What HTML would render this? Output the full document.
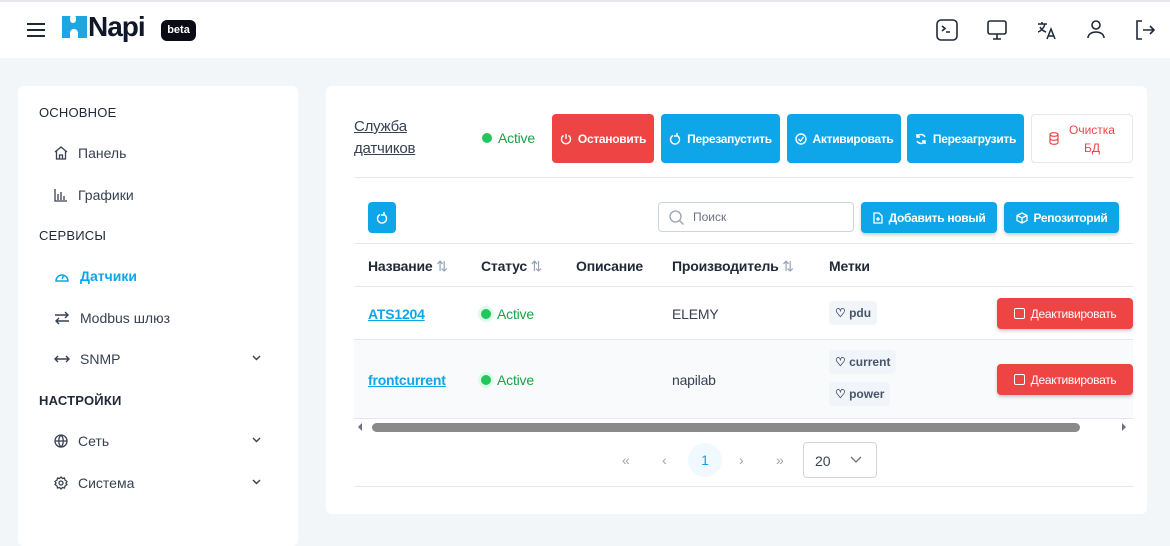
<!DOCTYPE html>
<html><head><meta charset="utf-8"><style>
*{box-sizing:border-box;margin:0;padding:0}
body{width:1170px;height:531px;overflow:hidden;background:#f3f6f9;font-family:"Liberation Sans",sans-serif;color:#334155;position:relative}
.a{position:absolute}
svg{display:block}
.top{left:0;top:0;width:1170px;height:58px;background:#fff;border-top:2px solid #e5e7eb}
.card{background:#fff;border-radius:6px}
.sec{font-size:13px;color:#1f2937;letter-spacing:.2px}
.item{font-size:14px;color:#374151;display:flex;align-items:center;gap:10px}
.btn{color:#fff;font-size:12px;font-weight:bold;display:flex;align-items:center;justify-content:center;gap:6px;border-radius:4px;letter-spacing:-.3px}
.blue{background:#0ea5e9}
.red{background:#ef4444}
.th{font-size:14px;font-weight:bold;color:#1f2937;letter-spacing:-.2px}
.td{font-size:14px;color:#374151;letter-spacing:-.2px}
.lnk{font-size:14px;font-weight:bold;color:#0ea5e9;text-decoration:underline;letter-spacing:-.2px}
.act{font-size:14px;color:#16a34a;display:flex;align-items:center;gap:6px;letter-spacing:-.2px}
.dot{width:10px;height:10px;border-radius:50%;background:#22c55e;box-shadow:0 0 0 3px #dcfce7}
.tag{background:#f1f5f9;border-radius:4px;font-size:12px;font-weight:bold;color:#475569;display:flex;align-items:center;gap:3px;padding:0 6px;height:24px}
.hl{height:1px;background:#e5e7eb}
</style></head><body>
<div class="a top"></div>
<svg class="a" style="left:26px;top:22px" width="20" height="16" viewBox="0 0 20 16"><path d="M1 2h18M1 8h18M1 14h18" stroke="#1f2937" stroke-width="2"/></svg>
<svg class="a" style="left:62px;top:16px" width="25" height="22" viewBox="0 0 25 22"><rect x="0" y="0" width="25" height="22" fill="#1ca7e3"/><rect x="8" y="-1" width="6" height="8" rx="3" fill="#fff"/><path d="M8 23v-6a4 4 0 0 1 8 0v6z" fill="#fff"/></svg>
<div class="a" style="left:88px;top:11px;font-size:28px;font-weight:bold;color:#0f172a;letter-spacing:-1px">Napi</div>
<div class="a" style="left:161px;top:20px;width:35px;height:21px;background:#0b0b16;border-radius:6px;color:#fff;font-size:11px;font-weight:bold;text-align:center;line-height:21px">beta</div>
<svg class="a" style="left:936px;top:19px" width="22" height="22" viewBox="0 0 22 22" fill="none" stroke="#1f2937" stroke-width="1.6"><rect x="1" y="1" width="20" height="20" rx="4"/><path d="M6 7l3 2.5-3 2.5M10 13h4"/></svg>
<svg class="a" style="left:986px;top:19px" width="22" height="22" viewBox="0 0 22 22" fill="none" stroke="#1f2937" stroke-width="1.6"><rect x="2" y="2" width="18" height="13" rx="2"/><path d="M11 15v5M7 20h8"/></svg>
<svg class="a" style="left:1036px;top:19px" width="22" height="22" viewBox="0 0 22 22" fill="none" stroke="#1f2937" stroke-width="1.5"><path d="M2 5h9M6 3v2M9 5c-1 4-4 7-7 8M4 8c1 2 3 4 6 5M11 20l4-10 4 10M12.5 17h5"/></svg>
<svg class="a" style="left:1085px;top:18px" width="22" height="22" viewBox="0 0 22 22" fill="none" stroke="#1f2937" stroke-width="1.6"><circle cx="11" cy="7" r="4"/><path d="M3 20c0-4 4-6 8-6s8 2 8 6"/></svg>
<svg class="a" style="left:1134px;top:19px" width="22" height="22" viewBox="0 0 22 22" fill="none" stroke="#1f2937" stroke-width="1.6"><path d="M8 2H3v18h5M9 11h11M16 7l4 4-4 4"/></svg>

<div class="a card" style="left:18px;top:86px;width:280px;height:460px"></div>
<div class="a sec" style="left:39px;top:105px">ОСНОВНОЕ</div>
<div class="a item" style="left:54px;top:145px"><svg width="14" height="14" viewBox="0 0 14 14" fill="none" stroke="#374151" stroke-width="1.3"><path d="M1 6l6-5 6 5M2.5 5v8h9V5M5.5 13V9h3v4"/></svg>Панель</div>
<div class="a item" style="left:54px;top:187px"><svg width="14" height="14" viewBox="0 0 14 14" fill="none" stroke="#374151" stroke-width="1.3"><path d="M1 1v12h12M4 12V6M7 12V4M10 12V8"/></svg>Графики</div>
<div class="a sec" style="left:39px;top:228px">СЕРВИСЫ</div>
<div class="a item" style="left:54px;top:268px;color:#0ea5e9;font-weight:bold"><svg width="16" height="14" viewBox="0 0 16 14" fill="none" stroke="#0ea5e9" stroke-width="1.5"><path d="M2 12a6 6 0 1 1 12 0z"/><path d="M8 10l2-4"/></svg>Датчики</div>
<div class="a item" style="left:54px;top:310px"><svg width="16" height="14" viewBox="0 0 16 14" fill="none" stroke="#374151" stroke-width="1.4"><path d="M1 4h13M11 1l3 3-3 3M15 10H2M5 7l-3 3 3 3"/></svg>Modbus шлюз</div>
<div class="a item" style="left:54px;top:351px"><svg width="16" height="10" viewBox="0 0 16 10" fill="none" stroke="#374151" stroke-width="1.4"><path d="M1 5h14M4 2L1 5l3 3M12 2l3 3-3 3"/></svg>SNMP</div>
<div class="a sec" style="left:39px;top:393px;font-weight:bold">НАСТРОЙКИ</div>
<div class="a item" style="left:54px;top:433px"><svg width="14" height="14" viewBox="0 0 14 14" fill="none" stroke="#374151" stroke-width="1.3"><circle cx="7" cy="7" r="6"/><path d="M1 7h12M7 1c-3 3-3 9 0 12M7 1c3 3 3 9 0 12"/></svg>Сеть</div>
<div class="a item" style="left:54px;top:475px"><svg width="14" height="14" viewBox="0 0 14 14" fill="none" stroke="#374151" stroke-width="1.3"><circle cx="7" cy="7" r="2"/><path d="M7 1l1.5 1.5 2-.5.5 2L13 5.5 12 7l1 1.5-2 1.5-.5 2-2-.5L7 13l-1.5-1.5-2 .5-.5-2L1 8.5 2 7 1 5.5 3 4l.5-2 2 .5z"/></svg>Система</div>
<svg class="a" style="left:252px;top:355px" width="9" height="6" viewBox="0 0 9 6"><path d="M1 1l3.5 3.5L8 1" stroke="#374151" stroke-width="1.4" fill="none"/></svg>
<svg class="a" style="left:252px;top:437px" width="9" height="6" viewBox="0 0 9 6"><path d="M1 1l3.5 3.5L8 1" stroke="#374151" stroke-width="1.4" fill="none"/></svg>
<svg class="a" style="left:252px;top:479px" width="9" height="6" viewBox="0 0 9 6"><path d="M1 1l3.5 3.5L8 1" stroke="#374151" stroke-width="1.4" fill="none"/></svg>

<div class="a card" style="left:326px;top:86px;width:821px;height:428px"></div>
<div class="a" style="left:354px;top:116px;font-size:15px;color:#374151;text-decoration:underline;line-height:22px;letter-spacing:-.2px">Служба<br>датчиков</div>
<div class="a act" style="left:482px;top:130px"><span class="dot" style="box-shadow:none"></span>Active</div>
<div class="a btn red" style="left:552px;top:114px;width:102px;height:49px"><svg width="12" height="12" viewBox="0 0 12 12" fill="none" stroke="#fff" stroke-width="1.4"><path d="M6 1v5M3.5 2.5a4.5 4.5 0 1 0 5 0"/></svg>Остановить</div>
<div class="a btn blue" style="left:661px;top:114px;width:119px;height:49px"><svg width="12" height="12" viewBox="0 0 12 12" fill="none" stroke="#fff" stroke-width="1.4"><path d="M8 2.5a4.5 4.5 0 1 1-4 0M8 0v3h-3"/></svg>Перезапустить</div>
<div class="a btn blue" style="left:787px;top:114px;width:114px;height:49px"><svg width="12" height="12" viewBox="0 0 12 12" fill="none" stroke="#fff" stroke-width="1.4"><circle cx="6" cy="6" r="5"/><path d="M3.5 6l2 2 3-4"/></svg>Активировать</div>
<div class="a btn blue" style="left:907px;top:114px;width:117px;height:49px"><svg width="12" height="12" viewBox="0 0 12 12" fill="none" stroke="#fff" stroke-width="1.5"><path d="M10 4A4.5 4.5 0 0 0 2 4M2 1v3h3M2 8a4.5 4.5 0 0 0 8 0M10 11V8H7"/></svg>Перезагрузить</div>
<div class="a" style="left:1031px;top:114px;width:102px;height:49px;border:1px solid #e5e7eb;border-radius:4px;color:#ef4444;font-size:12px;display:flex;align-items:center;justify-content:center;gap:10px"><svg width="10" height="13" viewBox="0 0 10 13" fill="none" stroke="#ef4444" stroke-width="1.2"><ellipse cx="5" cy="2.5" rx="4" ry="1.8"/><path d="M1 2.5v8c0 1 2 1.8 4 1.8s4-.8 4-1.8v-8M1 6.5c0 1 2 1.8 4 1.8s4-.8 4-1.8"/></svg><div style="text-align:center;line-height:18px">Очистка<br>БД</div></div>
<div class="a hl" style="left:354px;top:177px;width:779px"></div>

<div class="a btn blue" style="left:368px;top:202px;width:28px;height:31px"><svg width="12" height="12" viewBox="0 0 12 12" fill="none" stroke="#fff" stroke-width="1.4"><path d="M8 2.5a4.5 4.5 0 1 1-4 0M8 0v3h-3"/></svg></div>
<div class="a" style="left:658px;top:202px;width:196px;height:30px;border:1px solid #cbd5e1;border-radius:4px;display:flex;align-items:center;padding-left:10px;gap:9px;font-size:12px;color:#6b7280"><svg width="15" height="15" viewBox="0 0 15 15" fill="none" stroke="#9ca3af" stroke-width="1.3"><circle cx="6.5" cy="6.5" r="5.5"/><path d="M10.5 10.5l4 4"/></svg>Поиск</div>
<div class="a btn blue" style="left:861px;top:202px;width:136px;height:31px;box-shadow:0 2px 3px rgba(0,0,0,.2)"><svg width="10" height="12" viewBox="0 0 10 12" fill="none" stroke="#fff" stroke-width="1.3"><path d="M1 1h5l3 3v7H1zM5 5v4M3 7h4"/></svg>Добавить новый</div>
<div class="a btn blue" style="left:1004px;top:202px;width:115px;height:31px;box-shadow:0 2px 3px rgba(0,0,0,.2)"><svg width="12" height="12" viewBox="0 0 12 12" fill="none" stroke="#fff" stroke-width="1.3"><path d="M6 1l5 2.5v5L6 11 1 8.5v-5zM1 3.5L6 6l5-2.5M6 6v5"/></svg>Репозиторий</div>
<div class="a hl" style="left:354px;top:243px;width:779px"></div>

<div class="a th" style="left:368px;top:258px">Название <span style="color:#94a3b8;font-weight:normal">⇅</span></div>
<div class="a th" style="left:481px;top:258px">Статус <span style="color:#94a3b8;font-weight:normal">⇅</span></div>
<div class="a th" style="left:576px;top:258px">Описание</div>
<div class="a th" style="left:672px;top:258px">Производитель <span style="color:#94a3b8;font-weight:normal">⇅</span></div>
<div class="a th" style="left:829px;top:258px">Метки</div>
<div class="a hl" style="left:354px;top:286px;width:779px"></div>

<div class="a lnk" style="left:368px;top:306px">ATS1204</div>
<div class="a act" style="left:481px;top:306px"><span class="dot"></span>Active</div>
<div class="a td" style="left:672px;top:306px">ELEMY</div>
<div class="a tag" style="left:829px;top:301px">♡ pdu</div>
<div class="a btn red" style="left:997px;top:298px;width:136px;height:31px;font-weight:normal;box-shadow:0 2px 3px rgba(0,0,0,.2)"><span style="width:11px;height:11px;border:1.5px solid #fff;border-radius:2px"></span>Деактивировать</div>
<div class="a hl" style="left:354px;top:339px;width:779px"></div>

<div class="a" style="left:354px;top:340px;width:779px;height:78px;background:#f8fafc"></div>
<div class="a lnk" style="left:368px;top:372px">frontcurrent</div>
<div class="a act" style="left:481px;top:372px"><span class="dot"></span>Active</div>
<div class="a td" style="left:672px;top:372px">napilab</div>
<div class="a tag" style="left:829px;top:350px">♡ current</div>
<div class="a tag" style="left:829px;top:382px">♡ power</div>
<div class="a btn red" style="left:997px;top:364px;width:136px;height:31px;font-weight:normal;box-shadow:0 2px 3px rgba(0,0,0,.2)"><span style="width:11px;height:11px;border:1.5px solid #fff;border-radius:2px"></span>Деактивировать</div>
<div class="a hl" style="left:354px;top:418px;width:779px"></div>

<div class="a" style="left:358px;top:423px;width:0;height:0;border:4px solid transparent;border-right:4px solid #6b7280;border-left:0"></div>
<div class="a" style="left:372px;top:423px;width:708px;height:9px;background:#8a8a8a;border-radius:5px"></div>
<div class="a" style="left:1122px;top:423px;width:0;height:0;border:4px solid transparent;border-left:4px solid #6b7280;border-right:0"></div>

<div class="a" style="left:622px;top:452px;font-size:14px;color:#9ca3af">«</div>
<div class="a" style="left:662px;top:452px;font-size:14px;color:#9ca3af">‹</div>
<div class="a" style="left:688px;top:443px;width:34px;height:34px;border-radius:50%;background:#f0f9ff;color:#0ea5e9;font-size:14px;text-align:center;line-height:34px">1</div>
<div class="a" style="left:739px;top:452px;font-size:14px;color:#9ca3af">›</div>
<div class="a" style="left:776px;top:452px;font-size:14px;color:#9ca3af">»</div>
<div class="a" style="left:803px;top:442px;width:74px;height:36px;border:1px solid #d1d5db;border-radius:4px;font-size:14px;color:#374151;padding:10px 0 0 11px">20</div>
<svg class="a" style="left:850px;top:456px" width="12" height="7" viewBox="0 0 12 7"><path d="M1 1l5 5 5-5" stroke="#6b7280" stroke-width="1.3" fill="none"/></svg>
<div class="a hl" style="left:354px;top:486px;width:779px"></div>
</body></html>
